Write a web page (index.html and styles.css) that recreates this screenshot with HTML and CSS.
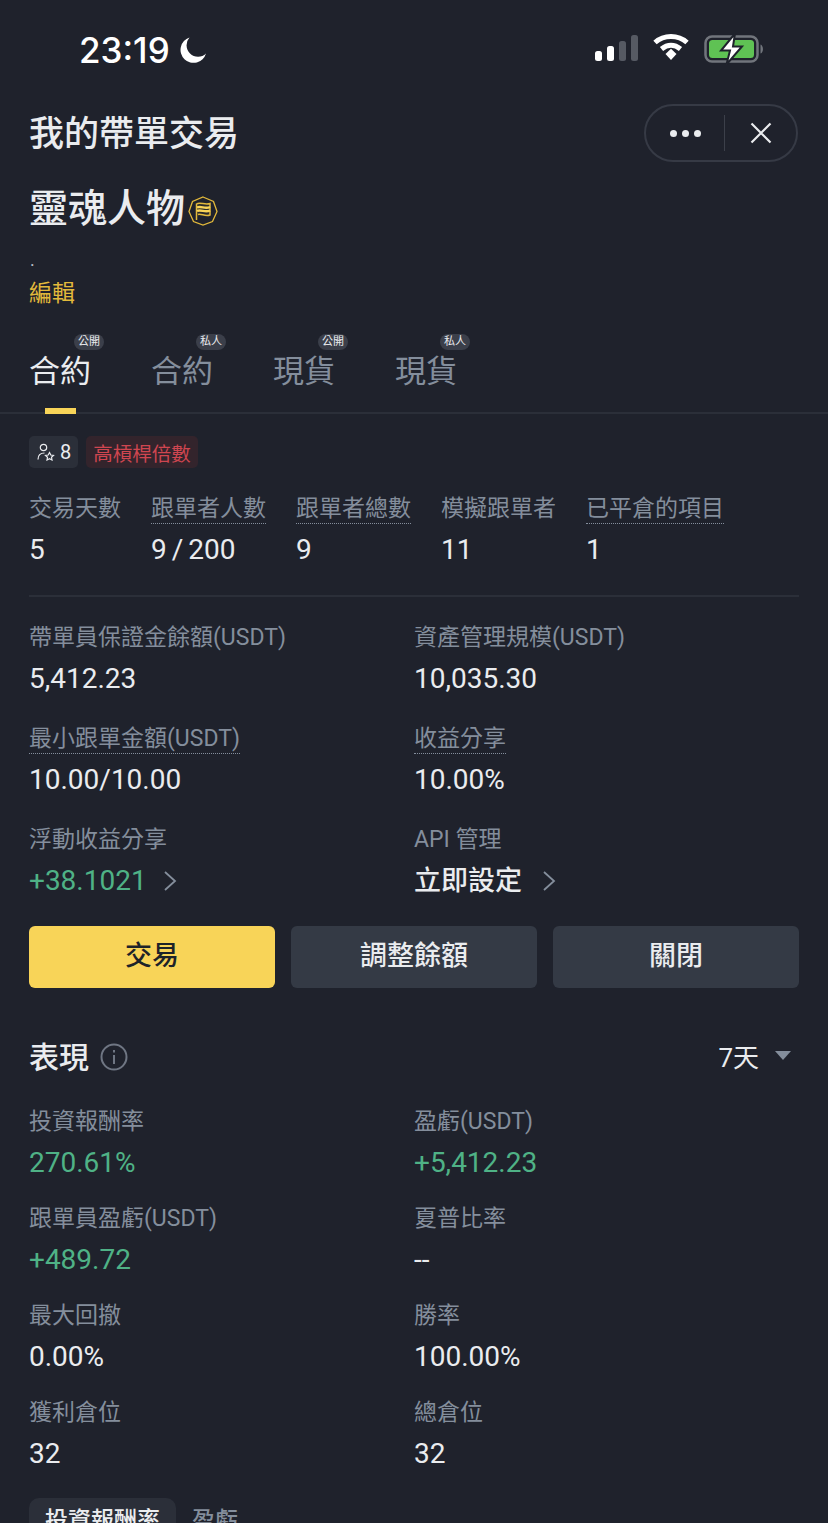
FILE: index.html
```html
<!DOCTYPE html>
<html lang="zh-Hant">
<head>
    <meta charset="UTF-8">
    <meta name="viewport" content="width=device-width, initial-scale=1.0">
    <title>我的帶單交易</title>
    <link rel="stylesheet" href="styles.css">
</head>
<body>
    <div class="status-bar">
        <div class="clock">
            <span>23:19</span>
            <svg class="moon" width="28" height="28" viewBox="0 0 28 28"><path d="M10.5 1.5A13 13 0 1 0 27 17.5 11.5 11.5 0 0 1 10.5 1.5Z" fill="#fff"/></svg>
        </div>
        <div class="status-icons">
            <svg width="43" height="28" viewBox="0 0 43 28">
                <rect x="0" y="18" width="7" height="10" rx="2.500" fill="#fff"/>
                <rect x="12" y="13" width="7" height="15" rx="2.500" fill="#fff"/>
                <rect x="24" y="8" width="7" height="20" rx="2.500" fill="#565a63"/>
                <rect x="36" y="2" width="7" height="26" rx="2.500" fill="#565a63"/>
            </svg>
            <svg width="38" height="28" viewBox="0 0 38 28" fill="none">
                <path d="M3 9.5C12 1.5 26 1.5 35 9.5" stroke="#fff" stroke-width="5"/>
                <path d="M9.5 16C15.5 11 22.5 11 28.5 16" stroke="#fff" stroke-width="5"/>
                <path d="M13.5 21L19 15.8 24.500 21 19 27Z" fill="#fff"/>
            </svg>
            <svg width="62" height="32" viewBox="0 0 62 32">
                <rect x="1.500" y="3.500" width="52" height="25" rx="6.500" fill="none" stroke="#71757c" stroke-width="2.500"/>
                <rect x="5" y="7" width="45" height="18" rx="3.500" fill="#5fc254"/>
                <path d="M56.500 11.500c3 .8 3.500 8.200 0 9Z" fill="#71757c"/>
                <path d="M31 0.500 17 17.500H26L22.500 31.500 38 13.500H29Z" fill="#fff" stroke="#1f222c" stroke-width="2"/>
            </svg>
        </div>
    </div>

    <div class="title-bar">
        <h1 class="page-title">我的帶單交易</h1>
        <div class="capsule">
            <div class="capsule-dots"><i></i><i></i><i></i></div>
            <div class="capsule-line"></div>
            <svg width="22" height="22" viewBox="0 0 22 22"><path d="M1.500 1.500 20.500 20.500M20.500 1.500 1.500 20.500" stroke="#eaecef" stroke-width="2.200"/></svg>
        </div>
    </div>

    <div class="name-row">
        <span class="name">靈魂人物</span>
        <svg class="name-badge" width="30" height="30" viewBox="0 0 30 30" fill="none">
            <path d="M15 1 25.500 5.500 29 15.500 24.500 25.500 15 29 5.500 25.500 1 15.500 4.500 5.500Z" stroke="#e2b93b" stroke-width="1.300"/>
            <path d="M8.500 24V8C12 5.500 17 9.500 22 7.500V19C17 21 13 17 10 18.500" fill="#2a2a2a" stroke="#e2b93b" stroke-width="1.500"/>
            <path d="M9 11.500C13 9.500 17 13.500 22 11M9 15C13 13 17 17 22 14.500" stroke="#f8d458" stroke-width="2.400"/>
        </svg>
    </div>
    <div class="dot-line">.</div>
    <div class="edit-link">編輯</div>

    <div class="tabs">
        <div class="tab active">合約<span class="tab-badge">公開</span></div>
        <div class="tab">合約<span class="tab-badge">私人</span></div>
        <div class="tab">現貨<span class="tab-badge">公開</span></div>
        <div class="tab">現貨<span class="tab-badge">私人</span></div>
    </div>

    <div class="content">
        <div class="tags">
            <div class="tag tag-count">
                <svg width="18" height="18" viewBox="0 0 18 18" fill="none" stroke="#eaecef" stroke-width="1.200">
                    <circle cx="6.500" cy="4.500" r="3.200"/>
                    <path d="M1 16.500C1 12 3.500 10 7.500 10"/>
                    <path d="M12.500 9.500 13.800 12 16.500 12.400 14.500 14.300 15 17 12.500 15.700 10 17 10.500 14.300 8.500 12.400 11.200 12Z"/>
                </svg>
                <span>8</span>
            </div>
            <div class="tag tag-risk">高槓桿倍數</div>
        </div>

        <div class="stats">
            <div class="stat"><div class="label">交易天數</div><div class="value">5</div></div>
            <div class="stat"><div class="label"><span class="dotted">跟單者人數</span></div><div class="value tight">9 / 200</div></div>
            <div class="stat"><div class="label"><span class="dotted">跟單者總數</span></div><div class="value">9</div></div>
            <div class="stat"><div class="label">模擬跟單者</div><div class="value">11</div></div>
            <div class="stat"><div class="label"><span class="dotted">已平倉的項目</span></div><div class="value">1</div></div>
        </div>

        <div class="info-grid">
            <div class="cell"><div class="label">帶單員保證金餘額(USDT)</div><div class="value">5,412.23</div></div>
            <div class="cell"><div class="label">資產管理規模(USDT)</div><div class="value">10,035.30</div></div>
            <div class="cell"><div class="label"><span class="dotted">最小跟單金額(USDT)</span></div><div class="value">10.00/10.00</div></div>
            <div class="cell"><div class="label"><span class="dotted">收益分享</span></div><div class="value">10.00%</div></div>
            <div class="cell">
                <div class="label">浮動收益分享</div>
                <div class="value green">+38.1021<svg class="chev chev-near" width="14" height="20" viewBox="0 0 14 20"><path d="M2 1 12 10 2 19" fill="none" stroke="#848e9c" stroke-width="1.800"/></svg></div>
            </div>
            <div class="cell">
                <div class="label">API 管理</div>
                <div class="value cjk">立即設定<svg class="chev" width="14" height="20" viewBox="0 0 14 20"><path d="M2 1 12 10 2 19" fill="none" stroke="#848e9c" stroke-width="1.800"/></svg></div>
            </div>
        </div>

        <div class="buttons">
            <div class="btn btn-primary">交易</div>
            <div class="btn">調整餘額</div>
            <div class="btn">關閉</div>
        </div>

        <div class="perf-head">
            <div class="perf-title">
                <span>表現</span>
                <svg class="info-icon" width="28" height="28" viewBox="0 0 28 28" fill="none" stroke="#6f7683">
                    <circle cx="14" cy="14" r="12.500" stroke-width="2"/>
                    <path d="M14 12V21M14 7V9.500" stroke-width="2"/>
                </svg>
            </div>
            <div class="period">7天<span class="caret"></span></div>
        </div>

        <div class="perf-grid">
            <div class="cell"><div class="label">投資報酬率</div><div class="value green">270.61%</div></div>
            <div class="cell"><div class="label">盈虧(USDT)</div><div class="value green">+5,412.23</div></div>
            <div class="cell"><div class="label">跟單員盈虧(USDT)</div><div class="value green">+489.72</div></div>
            <div class="cell"><div class="label">夏普比率</div><div class="value">--</div></div>
            <div class="cell"><div class="label">最大回撤</div><div class="value">0.00%</div></div>
            <div class="cell"><div class="label">勝率</div><div class="value">100.00%</div></div>
            <div class="cell"><div class="label">獲利倉位</div><div class="value">32</div></div>
            <div class="cell"><div class="label">總倉位</div><div class="value">32</div></div>
        </div>

        <div class="chart-tabs">
            <div class="chart-tab active">投資報酬率</div>
            <div class="chart-tab">盈虧</div>
        </div>
    </div>
</body>
</html>
```

FILE: styles.css
```css
* {
    box-sizing: border-box;
}
html, body {
    margin: 0;
    height: 1523px;
    overflow: hidden;
}
body {
    background-color: #1f222c;
    color: #eaecef;
    font-family: Roboto, 'Noto Sans CJK TC', sans-serif;
}

/* status bar */
.status-bar {
    height: 100px;
    display: flex;
    justify-content: space-between;
    padding: 32px 62px 0 79px;
}
.clock {
    display: flex;
    align-items: flex-start;
    gap: 9px;
    color: #fff;
    font-family: Inter, sans-serif;
    font-size: 35px;
    font-weight: 500;
    line-height: 36px;
}
.moon {
    margin-top: 4px;
}
.status-icons {
    display: flex;
    align-items: flex-start;
    gap: 14px;
    padding-top: 1px;
}

/* header */
.title-bar {
    height: 66px;
    display: flex;
    justify-content: space-between;
    align-items: center;
    padding: 0 30px 0 29px;
}
.page-title {
    margin: 0;
    padding-top: 4px;
    font-size: 35px;
    font-weight: 500;
    line-height: 66px;
}
.capsule {
    width: 154px;
    height: 58px;
    border: 2px solid #363a45;
    border-radius: 29px;
    display: flex;
    align-items: center;
    padding-left: 24px;
}
.capsule-dots {
    display: flex;
    gap: 5px;
    width: 54px;
}
.capsule-dots i {
    width: 7px;
    height: 7px;
    border-radius: 50%;
    background-color: #eaecef;
}
.capsule-line {
    width: 1px;
    height: 36px;
    background-color: #3c404a;
    margin-right: 25px;
}
.name-row {
    display: flex;
    align-items: center;
    gap: 3px;
    padding: 0 29px;
    height: 64px;
    margin-top: 11px;
}
.name {
    font-size: 39px;
    font-weight: 500;
    line-height: 64px;
}
.name-badge {
    margin-top: 4px;
}
.dot-line {
    padding: 0 30px;
    font-size: 18px;
    line-height: 24px;
    margin-top: 7px;
    color: #b7bdc6;
}
.edit-link {
    padding: 0 29px;
    font-size: 23px;
    line-height: 36px;
    color: #e2b93b;
    margin-top: 4px;
}

/* tabs */
.tabs {
    display: flex;
    gap: 61px;
    height: 100px;
    padding: 0 29px;
    margin-top: 2px;
    border-bottom: 2px solid #2b2f39;
}
.tab {
    position: relative;
    width: 61px;
    height: 98px;
    padding-top: 38px;
    font-size: 31px;
    line-height: 40px;
    color: #848e9c;
    white-space: nowrap;
}
.tab.active {
    color: #eaecef;
}
.tab.active::after {
    content: "";
    position: absolute;
    left: 16px;
    bottom: -2px;
    width: 31px;
    height: 6px;
    background-color: #f8d458;
}
.tab-badge {
    position: absolute;
    left: 45px;
    top: 20px;
    width: 30px;
    height: 16px;
    border-radius: 8px;
    background-color: #3b3f4a;
    color: #eaecef;
    font-size: 11px;
    line-height: 16px;
    text-align: center;
}

/* main */
.content {
    padding: 0 29px;
}
.tags {
    display: flex;
    gap: 8px;
    margin-top: 22px;
    height: 32px;
    align-items: center;
}
.tag {
    height: 32px;
    border-radius: 5px;
    display: flex;
    align-items: center;
    font-size: 20px;
}
.tag-count {
    gap: 5px;
    width: 49px;
    padding-left: 8px;
    background-color: #2b2f39;
    color: #eaecef;
}
.tag-risk {
    width: 112px;
    justify-content: center;
    background-color: #33242c;
    color: #cf4650;
    font-size: 19.500px;
}
.label {
    font-size: 23px;
    line-height: 30px;
    color: #848e9c;
    white-space: nowrap;
}
.dotted {
    display: inline-block;
    line-height: 28px;
    border-bottom: 1px dotted #848e9c;
}
.value {
    font-size: 28px;
    line-height: 34px;
    margin-top: 9px;
    color: #eaecef;
    white-space: nowrap;
    display: flex;
    align-items: center;
}
.value.tight {
    word-spacing: -2px;
}
.value.cjk {
    font-size: 27px;
    font-weight: 500;
}
.green {
    color: #4fb286;
}
.chev {
    margin-left: 20px;
}
.chev-near {
    margin-left: 16px;
}
.stats {
    display: flex;
    gap: 30px;
    margin-top: 26px;
    padding-bottom: 28px;
    border-bottom: 2px solid #2b2f39;
}
.info-grid {
    display: grid;
    grid-template-columns: 385px 1fr;
    grid-auto-rows: 101px;
    margin-top: 26px;
}
.buttons {
    display: grid;
    grid-template-columns: repeat(3, 1fr);
    gap: 16px;
    margin-top: 0;
}
.btn {
    height: 62px;
    border-radius: 6px;
    background-color: #343a45;
    color: #eaecef;
    font-size: 27px;
    font-weight: 500;
    line-height: 60px;
    text-align: center;
}
.btn-primary {
    background-color: #f8d458;
    color: #1e2329;
}
.perf-head {
    display: flex;
    justify-content: space-between;
    align-items: center;
    margin-top: 45px;
    height: 44px;
}
.perf-title {
    display: flex;
    align-items: center;
    gap: 11px;
    font-size: 30px;
    font-weight: 500;
}
.info-icon {
    margin-top: 3px;
}
.period {
    display: flex;
    align-items: center;
    gap: 16px;
    font-size: 26px;
    padding-right: 8px;
}
.caret {
    width: 0;
    height: 0;
    border-left: 8px solid transparent;
    border-right: 8px solid transparent;
    border-top: 9px solid #848e9c;
}
.perf-grid {
    display: grid;
    grid-template-columns: 385px 1fr;
    grid-auto-rows: 97px;
    margin-top: 30px;
}
.chart-tabs {
    display: flex;
    margin-top: 3px;
}
.chart-tab {
    height: 48px;
    padding: 8px 16px;
    font-size: 23px;
    line-height: 30px;
    font-weight: 500;
    color: #848e9c;
    border-radius: 10px;
}
.chart-tab.active {
    background-color: #2b2f39;
    color: #eaecef;
}
```
